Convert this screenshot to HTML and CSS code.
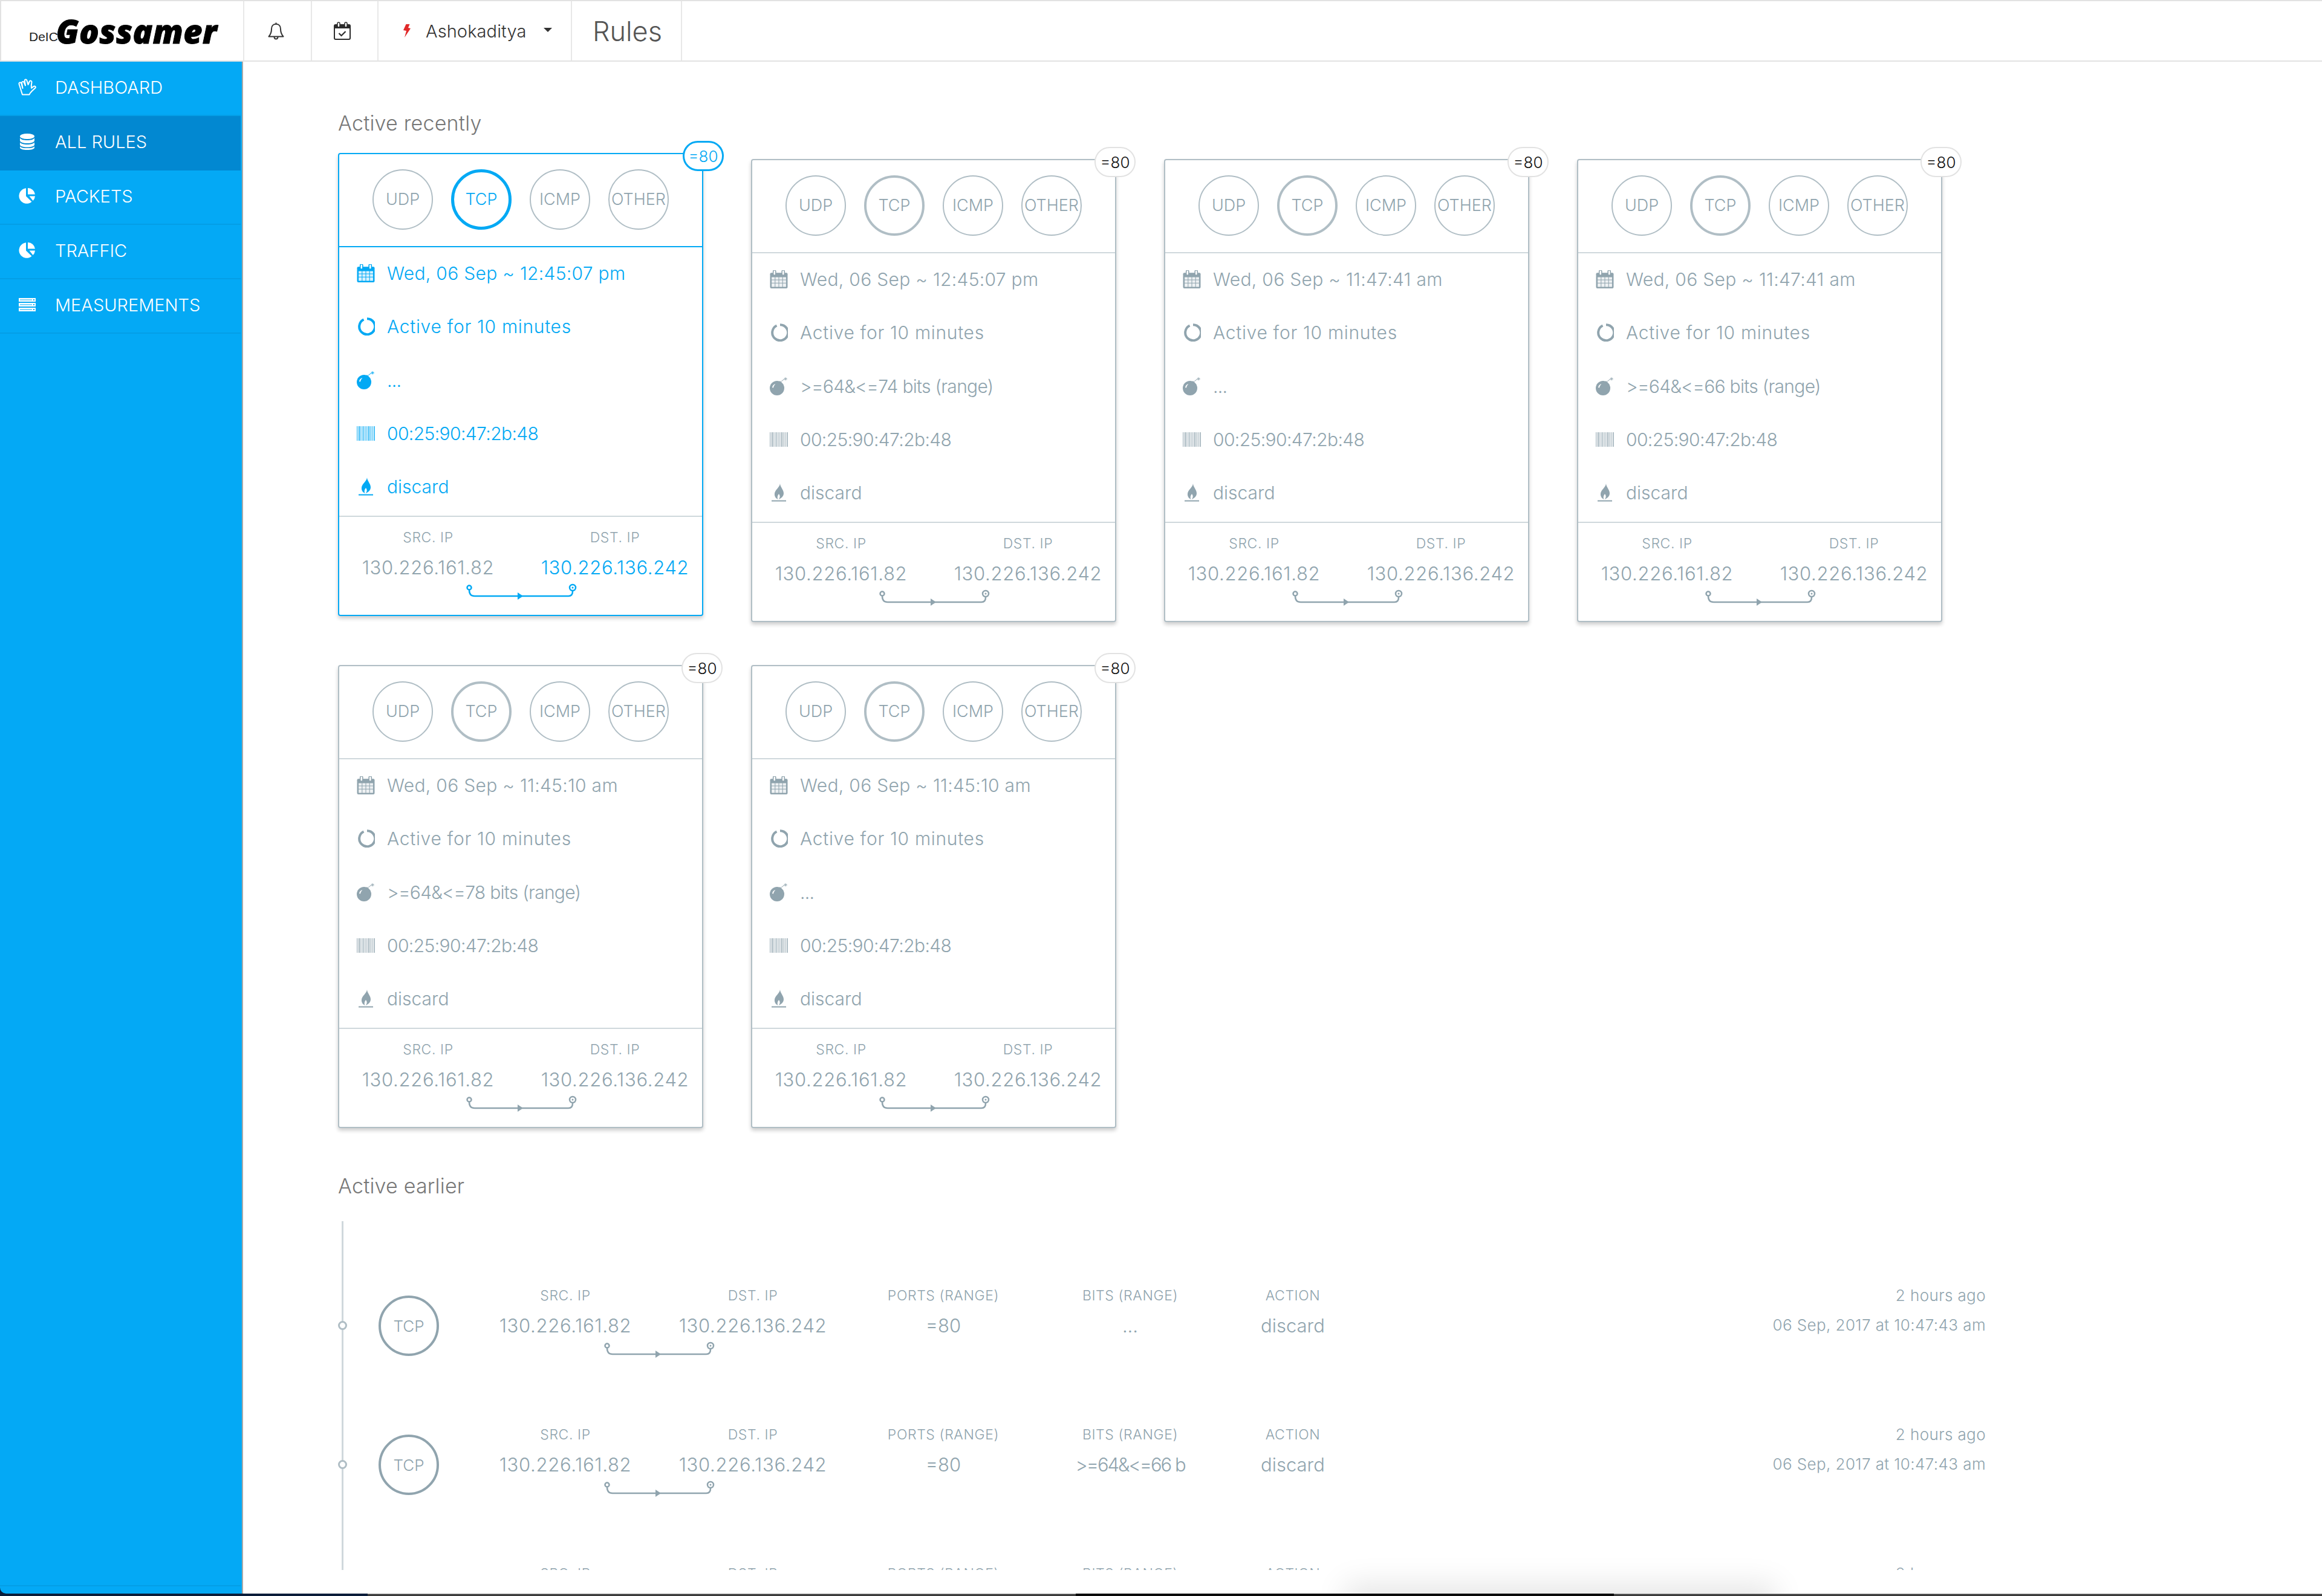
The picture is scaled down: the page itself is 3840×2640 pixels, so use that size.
FILE: index.html
```html
<!DOCTYPE html>
<html lang="en">
<head>
<meta charset="utf-8">
<title>Rules</title>
<link rel="stylesheet" href="styles.css">
</head>
<body>
<svg class="sprite" aria-hidden="true">
  <symbol id="i-spock" viewBox="0 0 30 28"><path d="M7 26.500h11.500c1-3 2.500-4 5-6.500l4.800-4.500c1.500-1.800-.8-4-2.800-2.500l-3.500 2.800-.3-4 .8-6c.2-2.500-3-3-3.800-.8L16.500 10 14.300 2.800c-.8-2.300-4-1.500-3.500 1L12 11.500 9.800 6.500C8.800 4 5.500 5 6 7.500L7.500 16 5.300 7.800C4.500 5.500 1 6.300 1.500 9z" fill="none" stroke="currentColor" stroke-width="2" stroke-linejoin="round"/></symbol>
  <symbol id="i-db" viewBox="0 0 24 27"><ellipse cx="12" cy="4.500" rx="12" ry="4.500" fill="currentColor"/><path d="M0 7c1.500 3 6 4 12 4s10.500-1 12-4v4.500c0 2.500-5 4.500-12 4.500S0 14 0 11.500zM0 14.300c1.500 2.700 6 3.700 12 3.700s10.500-1 12-3.700v4c0 2.500-5 4.200-12 4.200S0 20.800 0 18.300zM0 21c1.500 2.500 6 3 12 3s10.500-.5 12-3v2c0 2.500-5 4-12 4S0 25.500 0 23z" fill="currentColor"/></symbol>
  <symbol id="i-pie" viewBox="0 0 27 26"><path d="M12 .3A12.800 12.800 0 1 0 21.500 22.800L12 13.500zM15 0a12 12 0 0 1 12 10.500H15zM17.500 13.500H27a12.500 12.500 0 0 1-3.500 7.500z" fill="currentColor"/></symbol>
  <symbol id="i-srv" viewBox="0 0 28 22"><path d="M0 0h28v6H0zM0 8h28v6H0zM0 16h28v6H0z" fill="currentColor"/><path d="M2 2.500h20v1H2zM2 10.500h20v1H2zM2 18.500h20v1H2zM24 2h2v2h-2zM24 10h2v2h-2zM24 18h2v2h-2z" fill="#03a9f4"/></symbol>
  <symbol id="i-bell" viewBox="0 0 27 30"><path d="M13.500 1.500v2.300M13.500 3.800c-5 0-7.500 3.700-7.500 8.200 0 6-1.500 9-4.500 12.500h24C22.500 21 21 18 21 12c0-4.500-2.500-8.200-7.500-8.200zM10.500 24.800c0 5 6 5 6 0" fill="none" stroke="currentColor" stroke-width="2" stroke-linejoin="round"/></symbol>
  <symbol id="i-cal" viewBox="0 0 28 30"><path d="M3 5h22a2 2 0 0 1 2 2v20a2 2 0 0 1-2 2H3a2 2 0 0 1-2-2V7a2 2 0 0 1 2-2z" fill="none" stroke="currentColor" stroke-width="2"/><path d="M1 7a2 2 0 0 1 2-2h22a2 2 0 0 1 2 2v4H1z" fill="currentColor"/><rect x="6" y="1" width="4" height="8" rx="2" fill="#fff" stroke="currentColor" stroke-width="1.500"/><rect x="18" y="1" width="4" height="8" rx="2" fill="#fff" stroke="currentColor" stroke-width="1.500"/><path d="M8.500 19l4 4 7-7" fill="none" stroke="currentColor" stroke-width="2.200"/></symbol>
  <symbol id="i-bolt" viewBox="0 0 12 22"><path d="M4.500 0h6L8 6l4 1L2 22l3-11-5-1z" fill="currentColor"/></symbol>
  <symbol id="i-date" viewBox="0 0 28 29"><path d="M2 4h24a2 2 0 0 1 2 2v21a2 2 0 0 1-2 2H2a2 2 0 0 1-2-2V6a2 2 0 0 1 2-2z" fill="currentColor"/><rect x="5" y="0" width="4" height="8" rx="2" fill="#fff" stroke="currentColor" stroke-width="1.500"/><rect x="19" y="0" width="4" height="8" rx="2" fill="#fff" stroke="currentColor" stroke-width="1.500"/><path d="M2.500 11h5v4h-5zM8.500 11h5v4h-5zM14.500 11h5v4h-5zM20.500 11h5v4h-5zM2.500 16h5v4h-5zM8.500 16h5v4h-5zM14.500 16h5v4h-5zM20.500 16h5v4h-5zM2.500 21h5v5.500h-5zM8.500 21h5v5.500h-5zM14.500 21h5v5.500h-5zM20.500 21h5v5.500h-5z" fill="#fff" fill-opacity=".85"/></symbol>
  <symbol id="i-ring" viewBox="0 0 30 30"><path d="M11.500 3.500A13 13 0 1 0 17 2.200" fill="none" stroke="currentColor" stroke-width="4"/></symbol>
  <symbol id="i-bomb" viewBox="0 0 30 30"><circle cx="12" cy="18" r="12" fill="currentColor"/><path d="M17 6l3 3-3 3-3-3z" fill="currentColor"/><path d="M19 7l5-4" stroke="currentColor" stroke-width="1"/><path d="M26 0v5.500M23.500 2.800H29M24.300 1l3.500 3.500M27.800 1l-3.500 3.500" stroke="currentColor" stroke-width=".8"/><path d="M4 17c.5-3.500 2.500-5.500 5.500-6-2 2-3 3.500-3.500 6.500z" fill="#fff"/></symbol>
  <symbol id="i-bars" viewBox="0 0 30 24"><path d="M0 0h1v24H0zM2 0h1v24H2zM4 0h2v24H4zM7 0h.8v24H7zM9.500 0h2v24h-2zM13 0h1v24h-1zM15 0h1v24h-1zM17 0h.8v24H17zM19 0h2v24h-2zM22 0h1v24h-1zM24 0h.8v24H24zM26 0h1v24h-1zM28.300 0h1.700v24h-1.700z" fill="currentColor" fill-opacity=".8"/></symbol>
  <symbol id="i-flame" viewBox="0 0 24 30"><path d="M14 0c.5 6 6 10 6 16 0 5-4 8-8 10 2.500-4 2-6.500 0-9-2.500 3-3 6.500-1.500 9C7 24.500 4.500 21 5 16.500 5.500 10 13 7 14 0z" fill="currentColor"/><rect x="0" y="27.500" width="24" height="2" fill="currentColor"/></symbol>
  <symbol id="i-link" viewBox="0 0 190 34"><path d="M7 11c0 7 3 10 9 10h155c5 0 7-3 7-8" fill="none" stroke="currentColor" stroke-width="2.500"/><circle cx="7" cy="7" r="3.500" fill="#fff" stroke="currentColor" stroke-width="2.500"/><circle cx="178" cy="7" r="5" fill="#fff" stroke="currentColor" stroke-width="2.500"/><circle cx="178" cy="7" r="1.500" fill="currentColor"/><path d="M87 15l9 6-9 6z" fill="currentColor"/></symbol>
</svg>

<div class="app">
  <header class="topbar">
    <div class="cell cell-logo"><span class="logo-small">DeIC</span><span class="logo-big">Gossamer</span></div>
    <div class="cell cell-bell"><svg class="ico-bell"><use href="#i-bell"/></svg></div>
    <div class="cell cell-cal"><svg class="ico-cal"><use href="#i-cal"/></svg></div>
    <div class="cell cell-user"><svg class="ico-bolt"><use href="#i-bolt"/></svg><span class="user-name">Ashokaditya</span><span class="caret"></span></div>
    <div class="cell cell-title">Rules</div>
  </header>

  <div class="layout">
    <nav class="sidebar">
      <div class="nav-item"><svg class="nav-ico ico-spock"><use href="#i-spock"/></svg><span>DASHBOARD</span></div>
      <div class="nav-item nav-active"><svg class="nav-ico ico-db"><use href="#i-db"/></svg><span>ALL RULES</span></div>
      <div class="nav-item"><svg class="nav-ico ico-pie"><use href="#i-pie"/></svg><span>PACKETS</span></div>
      <div class="nav-item"><svg class="nav-ico ico-pie"><use href="#i-pie"/></svg><span>TRAFFIC</span></div>
      <div class="nav-item"><svg class="nav-ico ico-srv"><use href="#i-srv"/></svg><span>MEASUREMENTS</span></div>
      <div class="nav-foot"></div>
    </nav>

    <main class="main">
      <div class="scroll">
        <div class="section-title">Active recently</div>
        <div class="cards">

          <article class="card card-active">
            <div class="badge">=80</div>
            <div class="proto-row"><div class="proto">UDP</div><div class="proto proto-on">TCP</div><div class="proto">ICMP</div><div class="proto">OTHER</div></div>
            <div class="rows">
              <div class="row"><svg class="row-ico"><use href="#i-date"/></svg>Wed, 06 Sep ~ 12:45:07 pm</div>
              <div class="row"><svg class="row-ico"><use href="#i-ring"/></svg>Active for 10 minutes</div>
              <div class="row"><svg class="row-ico"><use href="#i-bomb"/></svg>...</div>
              <div class="row"><svg class="row-ico"><use href="#i-bars"/></svg>00:25:90:47:2b:48</div>
              <div class="row"><svg class="row-ico"><use href="#i-flame"/></svg>discard</div>
            </div>
            <div class="foot">
              <div class="ends"><div class="end"><div class="lbl">SRC. IP</div><div class="val">130.226.161.82</div></div><div class="end end-dst"><div class="lbl">DST. IP</div><div class="val">130.226.136.242</div></div></div>
              <svg class="link"><use href="#i-link"/></svg>
            </div>
          </article>

          <article class="card">
            <div class="badge">=80</div>
            <div class="proto-row"><div class="proto">UDP</div><div class="proto proto-on">TCP</div><div class="proto">ICMP</div><div class="proto">OTHER</div></div>
            <div class="rows">
              <div class="row"><svg class="row-ico"><use href="#i-date"/></svg>Wed, 06 Sep ~ 12:45:07 pm</div>
              <div class="row"><svg class="row-ico"><use href="#i-ring"/></svg>Active for 10 minutes</div>
              <div class="row"><svg class="row-ico"><use href="#i-bomb"/></svg>&gt;=64&amp;&lt;=74 bits (range)</div>
              <div class="row"><svg class="row-ico"><use href="#i-bars"/></svg>00:25:90:47:2b:48</div>
              <div class="row"><svg class="row-ico"><use href="#i-flame"/></svg>discard</div>
            </div>
            <div class="foot">
              <div class="ends"><div class="end"><div class="lbl">SRC. IP</div><div class="val">130.226.161.82</div></div><div class="end end-dst"><div class="lbl">DST. IP</div><div class="val">130.226.136.242</div></div></div>
              <svg class="link"><use href="#i-link"/></svg>
            </div>
          </article>

          <article class="card">
            <div class="badge">=80</div>
            <div class="proto-row"><div class="proto">UDP</div><div class="proto proto-on">TCP</div><div class="proto">ICMP</div><div class="proto">OTHER</div></div>
            <div class="rows">
              <div class="row"><svg class="row-ico"><use href="#i-date"/></svg>Wed, 06 Sep ~ 11:47:41 am</div>
              <div class="row"><svg class="row-ico"><use href="#i-ring"/></svg>Active for 10 minutes</div>
              <div class="row"><svg class="row-ico"><use href="#i-bomb"/></svg>...</div>
              <div class="row"><svg class="row-ico"><use href="#i-bars"/></svg>00:25:90:47:2b:48</div>
              <div class="row"><svg class="row-ico"><use href="#i-flame"/></svg>discard</div>
            </div>
            <div class="foot">
              <div class="ends"><div class="end"><div class="lbl">SRC. IP</div><div class="val">130.226.161.82</div></div><div class="end end-dst"><div class="lbl">DST. IP</div><div class="val">130.226.136.242</div></div></div>
              <svg class="link"><use href="#i-link"/></svg>
            </div>
          </article>

          <article class="card">
            <div class="badge">=80</div>
            <div class="proto-row"><div class="proto">UDP</div><div class="proto proto-on">TCP</div><div class="proto">ICMP</div><div class="proto">OTHER</div></div>
            <div class="rows">
              <div class="row"><svg class="row-ico"><use href="#i-date"/></svg>Wed, 06 Sep ~ 11:47:41 am</div>
              <div class="row"><svg class="row-ico"><use href="#i-ring"/></svg>Active for 10 minutes</div>
              <div class="row"><svg class="row-ico"><use href="#i-bomb"/></svg>&gt;=64&amp;&lt;=66 bits (range)</div>
              <div class="row"><svg class="row-ico"><use href="#i-bars"/></svg>00:25:90:47:2b:48</div>
              <div class="row"><svg class="row-ico"><use href="#i-flame"/></svg>discard</div>
            </div>
            <div class="foot">
              <div class="ends"><div class="end"><div class="lbl">SRC. IP</div><div class="val">130.226.161.82</div></div><div class="end end-dst"><div class="lbl">DST. IP</div><div class="val">130.226.136.242</div></div></div>
              <svg class="link"><use href="#i-link"/></svg>
            </div>
          </article>

          <article class="card">
            <div class="badge">=80</div>
            <div class="proto-row"><div class="proto">UDP</div><div class="proto proto-on">TCP</div><div class="proto">ICMP</div><div class="proto">OTHER</div></div>
            <div class="rows">
              <div class="row"><svg class="row-ico"><use href="#i-date"/></svg>Wed, 06 Sep ~ 11:45:10 am</div>
              <div class="row"><svg class="row-ico"><use href="#i-ring"/></svg>Active for 10 minutes</div>
              <div class="row"><svg class="row-ico"><use href="#i-bomb"/></svg>&gt;=64&amp;&lt;=78 bits (range)</div>
              <div class="row"><svg class="row-ico"><use href="#i-bars"/></svg>00:25:90:47:2b:48</div>
              <div class="row"><svg class="row-ico"><use href="#i-flame"/></svg>discard</div>
            </div>
            <div class="foot">
              <div class="ends"><div class="end"><div class="lbl">SRC. IP</div><div class="val">130.226.161.82</div></div><div class="end end-dst"><div class="lbl">DST. IP</div><div class="val">130.226.136.242</div></div></div>
              <svg class="link"><use href="#i-link"/></svg>
            </div>
          </article>

          <article class="card">
            <div class="badge">=80</div>
            <div class="proto-row"><div class="proto">UDP</div><div class="proto proto-on">TCP</div><div class="proto">ICMP</div><div class="proto">OTHER</div></div>
            <div class="rows">
              <div class="row"><svg class="row-ico"><use href="#i-date"/></svg>Wed, 06 Sep ~ 11:45:10 am</div>
              <div class="row"><svg class="row-ico"><use href="#i-ring"/></svg>Active for 10 minutes</div>
              <div class="row"><svg class="row-ico"><use href="#i-bomb"/></svg>...</div>
              <div class="row"><svg class="row-ico"><use href="#i-bars"/></svg>00:25:90:47:2b:48</div>
              <div class="row"><svg class="row-ico"><use href="#i-flame"/></svg>discard</div>
            </div>
            <div class="foot">
              <div class="ends"><div class="end"><div class="lbl">SRC. IP</div><div class="val">130.226.161.82</div></div><div class="end end-dst"><div class="lbl">DST. IP</div><div class="val">130.226.136.242</div></div></div>
              <svg class="link"><use href="#i-link"/></svg>
            </div>
          </article>
        </div>

        <div class="section-title section-earlier">Active earlier</div>
        <div class="timeline">
          <div class="tl-row">
            <div class="tl-proto-cell"><div class="tl-dot"></div><div class="tl-proto">TCP</div></div>
            <div class="tl-ends"><div class="ends"><div class="end"><div class="lbl">SRC. IP</div><div class="val">130.226.161.82</div></div><div class="end"><div class="lbl">DST. IP</div><div class="val">130.226.136.242</div></div></div><svg class="link"><use href="#i-link"/></svg></div>
            <div class="end"><div class="lbl">PORTS (RANGE)</div><div class="val">=80</div></div>
            <div class="end"><div class="lbl">BITS (RANGE)</div><div class="val">...</div></div>
            <div class="end"><div class="lbl">ACTION</div><div class="val">discard</div></div>
            <div class="end end-when"><div class="lbl when">2 hours ago</div><div class="val when">06 Sep, 2017 at 10:47:43 am</div></div>
          </div>
          <div class="tl-row">
            <div class="tl-proto-cell"><div class="tl-dot"></div><div class="tl-proto">TCP</div></div>
            <div class="tl-ends"><div class="ends"><div class="end"><div class="lbl">SRC. IP</div><div class="val">130.226.161.82</div></div><div class="end"><div class="lbl">DST. IP</div><div class="val">130.226.136.242</div></div></div><svg class="link"><use href="#i-link"/></svg></div>
            <div class="end"><div class="lbl">PORTS (RANGE)</div><div class="val">=80</div></div>
            <div class="end"><div class="lbl">BITS (RANGE)</div><div class="val val-bits">&gt;=64&amp;&lt;=66 b</div></div>
            <div class="end"><div class="lbl">ACTION</div><div class="val">discard</div></div>
            <div class="end end-when"><div class="lbl when">2 hours ago</div><div class="val when">06 Sep, 2017 at 10:47:43 am</div></div>
          </div>
          <div class="tl-row">
            <div class="tl-proto-cell"><div class="tl-dot"></div><div class="tl-proto">TCP</div></div>
            <div class="tl-ends"><div class="ends"><div class="end"><div class="lbl">SRC. IP</div><div class="val">130.226.161.82</div></div><div class="end"><div class="lbl">DST. IP</div><div class="val">130.226.136.242</div></div></div><svg class="link"><use href="#i-link"/></svg></div>
            <div class="end"><div class="lbl">PORTS (RANGE)</div><div class="val">=80</div></div>
            <div class="end"><div class="lbl">BITS (RANGE)</div><div class="val">...</div></div>
            <div class="end"><div class="lbl">ACTION</div><div class="val">discard</div></div>
            <div class="end end-when"><div class="lbl when">2 hours ago</div><div class="val when">06 Sep, 2017 at 10:47:43 am</div></div>
          </div>
        </div>
      </div>
      <div class="dock-shadow"></div>
    </main>
  </div>

  <div class="strip"><div class="strip-a"></div><div class="strip-b"></div><div class="strip-c"></div><div class="strip-b"></div></div>
</div>
</body>
</html>
```
FILE: styles.css
```css
* { box-sizing: border-box; }
html, body { margin: 0; padding: 0; }
body {
  width: 3840px;
  height: 2640px;
  overflow: hidden;
  background: #fff;
  font-family: Inter, "Liberation Sans", sans-serif;
  font-weight: 300;
  color: #90a4ae;
}
.sprite { position: absolute; width: 0; height: 0; }

.app { width: 3840px; height: 2640px; display: flex; flex-direction: column; background: #0b1d3a; }

/* top bar */
.topbar {
  height: 102px;
  flex: none;
  display: flex;
  background: #fff;
  border-top: 2px solid #e2e2e2;
  border-bottom: 2px solid #e2e2e2;
  border-left: 2px solid #e2e2e2;
  position: relative;
  z-index: 2;
}
.cell { display: flex; align-items: center; border-right: 2px solid #e8e8e8; height: 98px; color: #333; }
.cell-logo { width: 402px; padding-left: 46px; }
.cell-bell { width: 112px; justify-content: center; padding-right: 6px; }
.cell-cal { width: 110px; justify-content: center; padding-right: 8px; }
.cell-user { width: 320px; padding-left: 41px; }
.cell-title { width: 182px; padding-left: 34px; font-size: 45px; color: #555; }
.logo-small { font-family: "Liberation Sans", sans-serif; font-weight: 400; font-size: 21px; color: #222; margin-top: 20px; }
.logo-big { font-family: "Open Sans", "Liberation Sans", sans-serif; font-weight: 800; font-style: italic; font-size: 54px; color: #000; margin-left: -3px; letter-spacing: .5px; -webkit-text-stroke: 1px #000; }
.ico-bell { width: 27px; height: 30px; color: #333; }
.ico-cal { width: 28px; height: 30px; color: #2c2c2c; }
.ico-bolt { width: 12px; height: 22px; color: #e12a2a; }
.user-name { font-size: 29px; margin-left: 25px; color: #333; letter-spacing: .1px; }
.caret { width: 0; height: 0; border-left: 7px solid transparent; border-right: 7px solid transparent; border-top: 7px solid #333; margin-left: 29px; margin-top: -4px; }

/* layout */
.layout { flex: 1; display: flex; min-height: 0; }
.sidebar {
  width: 402px;
  flex: none;
  background: #04a9f5;
  border-right: 2px solid #a9a9a9;
  padding-right: 2px;
  border-bottom-left-radius: 10px;
  display: flex;
  flex-direction: column;
  color: #fff;
  font-weight: 350;
}
.nav-item { height: 90px; flex: none; display: flex; align-items: center; padding-left: 30px; font-size: 29px; border-bottom: 2px solid #049ee6; padding-bottom: 4px; }
.nav-active { background: #0288d1; border-bottom-color: #0288d1; }
.nav-ico { color: #fff; flex: none; margin-right: 31px; }
.ico-spock { width: 30px; height: 28px; }
.ico-db { width: 24px; height: 27px; margin-left: 3px; margin-right: 34px; }
.ico-pie { width: 27px; height: 26px; margin-left: 1px; margin-right: 33px; }
.ico-srv { width: 28px; height: 22px; margin-left: 1px; margin-right: 32px; }
.nav-foot { margin-top: auto; height: 14px; border-top: 2px solid #049ee6; }

.main { flex: 1; position: relative; overflow: hidden; background: #fff; }
.scroll { height: 2495px; overflow: hidden; padding: 77px 556px 0 157px; }
.dock-shadow { position: absolute; left: 1838px; width: 680px; bottom: -30px; height: 30px; box-shadow: 0 0 50px 16px rgba(0, 0, 0, .1); }

.section-title { font-size: 34px; line-height: 50px; height: 50px; color: #777; letter-spacing: .2px; }
.section-earlier { margin-top: 71px; }

/* cards */
.cards { display: grid; grid-template-columns: repeat(4, 604px); grid-auto-rows: 766px; column-gap: 79px; row-gap: 71px; margin-top: 34px; }
.card {
  position: relative;
  background: #fff;
  border: 2px solid #b0bec5;
  border-radius: 4px;
  box-shadow: 0 4px 6px rgba(0, 0, 0, .2);
  color: #90a4ae;
}
.card-active { border-color: #03a9f4; color: #03a9f4; transform: translateY(-10px); }
.badge {
  position: absolute;
  top: -22px;
  right: -34px;
  width: 68px;
  height: 50px;
  border: 2px solid #e2e2e2;
  border-radius: 25px;
  background: #fff;
  display: flex;
  align-items: center;
  justify-content: center;
  font-size: 26px;
  color: #111;
}
.card-active .badge { border: 3px solid #03a9f4; color: #03a9f4; right: -36px; }
.proto-row { height: 154px; padding-top: 25px; display: flex; justify-content: center; gap: 30px; border-bottom: 2px solid #cfd8dc; }
.card-active .proto-row { border-bottom-color: #03a9f4; }
.proto {
  width: 100px;
  height: 100px;
  flex: none;
  border: 2px solid #b0bec5;
  border-radius: 50%;
  display: flex;
  align-items: center;
  justify-content: center;
  font-size: 27px;
  color: #90a4ae;
  padding-bottom: 2px;
}
.proto-on { border-width: 4px; }
.card-active .proto-on { border-color: #03a9f4; color: #03a9f4; border-width: 5px; }
.rows { height: 444px; }
.row { height: 88px; display: flex; align-items: center; padding-left: 29px; font-size: 30px; }
.row:nth-child(1) { letter-spacing: .3px; padding-bottom: 3px; }
.row:nth-child(2) { letter-spacing: .7px; padding-bottom: 3px; }
.row:nth-child(3) { letter-spacing: -.7px; }
.row:nth-child(4) { letter-spacing: -.6px; }
.row-ico { width: 30px; height: 30px; margin-right: 20px; flex: none; color: inherit; }
.foot { border-top: 2px solid #cfd8dc; padding-top: 19px; }
.ends { display: grid; grid-template-columns: 294px 280px; column-gap: 22px; }
.end { text-align: center; color: #90a4ae; white-space: nowrap; }
.lbl { font-size: 23px; line-height: 30px; letter-spacing: .6px; }
.val { font-size: 31px; line-height: 40px; margin-top: 15px; }
.ends .val { letter-spacing: .7px; }
.val-bits { letter-spacing: -2px; }
.card-active .end-dst .val { color: #03a9f4; }
.link { display: block; width: 190px; height: 34px; margin: 6px 0 0 208px; color: #90a4ae; }
.card-active .link { color: #03a9f4; }

/* timeline */
.timeline { margin: 33px 0 0 6px; padding-top: 57px; border-left: 3px solid #cfd8dc; }
.tl-row { height: 230px; display: grid; grid-template-columns: 217px 600px 290px 288px 210px 1fr; column-gap: 20px; padding-top: 51px; margin-left: -10px; }
.tl-proto-cell { position: relative; padding-left: 68px; }
.tl-dot { position: absolute; left: 1px; top: 57px; width: 15px; height: 15px; border: 3px solid #b0bec5; border-radius: 50%; background: #fff; }
.tl-proto {
  width: 100px;
  height: 100px;
  margin-top: 15px;
  border: 4px solid #90a4ae;
  border-radius: 50%;
  display: flex;
  align-items: center;
  justify-content: center;
  font-size: 26px;
}
.tl-ends .ends { grid-template-columns: 280px 300px; column-gap: 20px; }
.tl-ends .link { margin: 6px 0 0 202px; }
.end-when { text-align: right; }
.lbl.when { font-size: 26px; letter-spacing: .4px; }
.val.when { font-size: 26px; letter-spacing: .4px; line-height: 30px; margin-top: 19px; }

/* bottom strip */
.strip { height: 4px; flex: none; display: flex; background: #0a0a0a; }
.strip-a { width: 608px; background: #0b1d3a; }
.strip-b { flex: 1; background: #3c3c3c; border-top: 1px solid #9a9a9a; }
.strip-c { width: 890px; background: #0a0a0a; }
```
